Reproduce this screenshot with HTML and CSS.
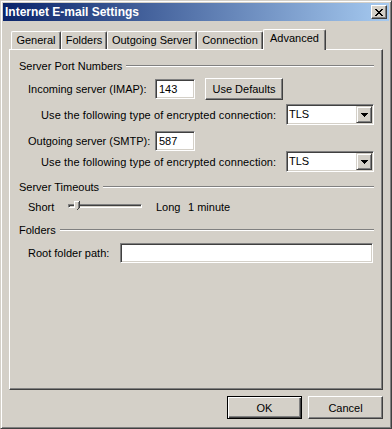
FILE: index.html
```html
<!DOCTYPE html>
<html lang="en">
<head>
    <meta charset="UTF-8">
    <title>Internet E-mail Settings</title>
    <link rel="stylesheet" href="styles.css">
</head>
<body>
    <div class="window">
        <div class="titlebar">
            <span class="title">Internet E-mail Settings</span>
            <span class="close-btn">
                <svg width="8" height="7" viewBox="0 0 8 7" shape-rendering="crispEdges"><path d="M0 0h2v1H0zM6 0h2v1H6zM1 1h2v1H1zM5 1h2v1H5zM2 2h4v1H2zM3 3h2v1H3zM2 4h4v1H2zM1 5h2v1H1zM5 5h2v1H5zM0 6h2v1H0zM6 6h2v1H6z" fill="#000"/></svg>
            </span>
        </div>
        <div class="dialog">
            <!-- pestañas -->
            <div class="tabs">
                <div class="tab tab-general">General</div>
                <div class="tab tab-folders">Folders</div>
                <div class="tab tab-outgoing">Outgoing Server</div>
                <div class="tab tab-connection">Connection</div>
                <div class="tab tab-advanced active">Advanced</div>
            </div>
            <div class="panel">
                <div class="group-head"><span>Server Port Numbers</span><i class="etch"></i></div>
                <div class="row row-port row-imap">
                    <span class="lbl-port">Incoming server (IMAP):</span>
                    <span class="field port">143</span>
                    <span class="btn btn-defaults">Use Defaults</span>
                </div>
                <div class="row row-enc">
                    <span class="lbl-enc">Use the following type of encrypted connection:</span>
                    <span class="combo"><span class="combo-text">TLS</span><span class="combo-arrow"><svg width="7" height="4" viewBox="0 0 7 4" shape-rendering="crispEdges"><path d="M0 0h7v1H0zM1 1h5v1H1zM2 2h3v1H2zM3 3h1v1H3z" fill="#000"/></svg></span></span>
                </div>
                <div class="row row-port row-smtp">
                    <span class="lbl-port">Outgoing server (SMTP):</span>
                    <span class="field port">587</span>
                </div>
                <div class="row row-enc row-enc2">
                    <span class="lbl-enc">Use the following type of encrypted connection:</span>
                    <span class="combo"><span class="combo-text">TLS</span><span class="combo-arrow"><svg width="7" height="4" viewBox="0 0 7 4" shape-rendering="crispEdges"><path d="M0 0h7v1H0zM1 1h5v1H1zM2 2h3v1H2zM3 3h1v1H3z" fill="#000"/></svg></span></span>
                </div>
                <div class="group-head group-timeouts"><span>Server Timeouts</span><i class="etch"></i></div>
                <div class="row row-slider">
                    <span class="lbl-short">Short</span>
                    <span class="track">
                        <svg class="thumb" width="6" height="10" viewBox="0 0 6 10" shape-rendering="crispEdges">
                            <path d="M0 0h6v7l-3 3l-3-3z" fill="#D4D0C8"/>
                            <path d="M0 0h5v1H1v6H0z" fill="#fff"/>
                            <path d="M5 0h1v7H5zM4 7h1v1H4zM3 8h1v1H3z" fill="#404040"/>
                            <path d="M4 1h1v6H4z" fill="#808080"/>
                        </svg>
                    </span>
                    <span class="lbl-long">Long</span>
                    <span>1 minute</span>
                </div>
                <div class="group-head group-folders"><span>Folders</span><i class="etch"></i></div>
                <div class="row row-root">
                    <span class="lbl-root">Root folder path:</span>
                    <span class="field root-path"></span>
                </div>
            </div>
            <div class="actions">
                <span class="btn btn-action default">OK</span>
                <span class="btn btn-action">Cancel</span>
            </div>
        </div>
    </div>
</body>
</html>
```
FILE: styles.css
```css
* {
    box-sizing: border-box;
}
body {
    margin: 0;
    font-family: "Liberation Sans", Arial, sans-serif;
    font-size: 11px;
    color: #000;
    background-color: #D4D0C8;
}
/* Ventana clásica */
.window {
    width: 392px;
    height: 429px;
    border: 1px solid;
    border-color: #D4D0C8 #404040 #404040 #D4D0C8;
    box-shadow: inset 1px 1px #fff, inset -1px -1px #808080;
    padding: 2px;
    background-color: #D4D0C8;
}
.titlebar {
    height: 18px;
    display: flex;
    align-items: center;
    background: linear-gradient(to right, #0A246A, #A6CAF0);
    color: #fff;
    padding-left: 2px;
}
.title {
    flex: 1;
    font-weight: bold;
    font-size: 12px;
}
.close-btn {
    width: 16px;
    height: 14px;
    margin-right: 2px;
    display: flex;
    align-items: center;
    justify-content: center;
    background-color: #D4D0C8;
    border: 1px solid;
    border-color: #fff #404040 #404040 #fff;
    box-shadow: inset -1px -1px #808080;
}
.dialog {
    padding: 8px 6px 0 6px;
}
/* Pestañas */
.tabs {
    display: flex;
    align-items: flex-end;
    height: 20px;
    padding-left: 2px;
}
.tab {
    height: 18px;
    border-top: 1px solid #fff;
    border-left: 1px solid #fff;
    border-right: 1px solid #404040;
    border-radius: 2px 2px 0 0;
    box-shadow: inset -1px 0 #808080;
    text-align: center;
    line-height: 17px;
}
.tab-general { width: 50px; }
.tab-folders { width: 46px; }
.tab-outgoing { width: 90px; }
.tab-connection { width: 66px; }
.tab-advanced { width: 63px; }
.tab.active {
    height: 21px;
    margin-bottom: -1px;
    position: relative;
    z-index: 1;
    background-color: #D4D0C8;
    line-height: 16px;
}
.panel {
    height: 341px;
    border: 1px solid;
    border-color: #fff #404040 #404040 #fff;
    box-shadow: inset -1px -1px #808080;
    padding: 9px 8px 0 9px;
}
.group-head {
    display: flex;
    align-items: center;
    height: 13px;
}
.etch {
    flex: 1;
    height: 2px;
    margin-left: 4px;
    border-top: 1px solid #808080;
    border-bottom: 1px solid #fff;
}
.group-timeouts { margin-top: 8px; }
.group-folders { margin-top: 7px; }
.row {
    display: flex;
    align-items: center;
}
.row-port {
    height: 20px;
    padding-left: 9px;
}
.row-imap {
    height: 22px;
    margin-top: 6px;
}
.row-smtp { margin-top: 6px; }
.lbl-port { width: 127px; }
.row-enc {
    height: 21px;
    margin-top: 4px;
    padding-left: 22px;
}
.lbl-enc { letter-spacing: 0.1px; }
.row-enc2 { margin-top: 0; }
/* Campos */
.field {
    height: 20px;
    background-color: #fff;
    border: 1px solid;
    border-color: #808080 #fff #fff #808080;
    box-shadow: inset 1px 1px #404040, inset -1px -1px #D4D0C8;
    padding: 0 3px;
    line-height: 18px;
}
.port { width: 40px; }
.btn {
    display: flex;
    align-items: center;
    justify-content: center;
    background-color: #D4D0C8;
    border: 1px solid;
    border-color: #fff #404040 #404040 #fff;
    box-shadow: inset -1px -1px #808080;
}
.btn-defaults {
    width: 78px;
    height: 22px;
    margin-left: 10px;
}
.combo {
    display: flex;
    width: 88px;
    height: 21px;
    margin-left: auto;
    padding: 1px;
    background-color: #fff;
    border: 1px solid;
    border-color: #808080 #fff #fff #808080;
    box-shadow: inset 1px 1px #404040, inset -1px -1px #D4D0C8;
}
.combo-text {
    flex: 1;
    padding-left: 1px;
    line-height: 17px;
}
.combo-arrow {
    width: 16px;
    height: 17px;
    display: flex;
    align-items: center;
    justify-content: center;
    background-color: #D4D0C8;
    border: 1px solid;
    border-color: #D4D0C8 #404040 #404040 #D4D0C8;
    box-shadow: inset 1px 1px #fff, inset -1px -1px #808080;
}
/* Deslizador */
.row-slider {
    height: 18px;
    margin-top: 5px;
    padding-left: 9px;
}
.lbl-short { width: 40px; }
.track {
    position: relative;
    width: 74px;
    height: 4px;
    margin-bottom: 3px;
    border: 1px solid;
    border-color: #808080 #fff #fff #808080;
    box-shadow: inset 1px 1px #404040;
}
.thumb {
    position: absolute;
    left: 5px;
    top: -4px;
}
.lbl-long {
    width: 32px;
    margin-left: 14px;
}
.row-root {
    height: 20px;
    margin-top: 7px;
    padding-left: 9px;
}
.lbl-root { width: 92px; }
.root-path {
    flex: 1;
    margin-right: 1px;
}
/* Botones inferiores */
.actions {
    display: flex;
    justify-content: flex-end;
    gap: 6px;
    margin-top: 6px;
}
.btn-action {
    width: 75px;
    height: 23px;
}
.btn-action.default {
    border: 1px solid #000;
    box-shadow: inset 1px 1px #fff, inset -1px -1px #404040, inset -2px -2px #808080;
}
```
